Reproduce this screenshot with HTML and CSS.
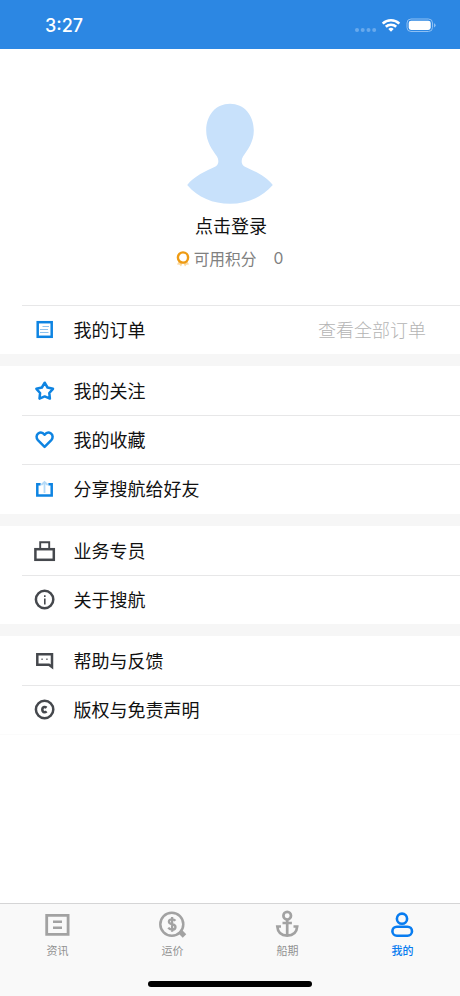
FILE: index.html
```html
<!DOCTYPE html>
<html lang="zh-CN">
<head>
<meta charset="utf-8">
<title>我的</title>
<link rel="stylesheet" href="styles.css">
</head>
<body>
<div class="app">
  <header class="status">
    <span class="time">3:27</span>
    <svg class="status-icons" width="84" height="20" viewBox="0 0 84 20">
      <g fill="#68a9ec"><circle cx="4" cy="14" r="2"/><circle cx="9.700" cy="14" r="2"/><circle cx="15.500" cy="14" r="2"/><circle cx="21.200" cy="14" r="2"/></g>
      <g fill="none" stroke="#fff" stroke-width="2.600"><path d="M29.700 7.600a12 12 0 0 1 16.600 0"/><path d="M32.800 10.800a7.600 7.600 0 0 1 10.400 0"/></g>
      <path d="M38 15.800l-2.700-2.800a4 4 0 0 1 5.400 0z" fill="#fff"/>
      <rect x="54" y="3" width="25.500" height="12.500" rx="4" fill="none" stroke="#8fc0f3"/>
      <rect x="55.700" y="4.700" width="22" height="9.200" rx="2.400" fill="#fff"/>
      <path d="M81 7.200v4.200q1.600-.7 1.600-2.100T81 7.200z" fill="#8fc0f3"/>
    </svg>
  </header>

  <section class="profile">
    <svg class="avatar" width="86" height="101" viewBox="0 0 86 101">
      <path fill="#c8e1fb" d="M43 .8C57 .8 66.800 12 66.800 27.500C66.800 39 60.500 47 56 53.500C54 57 54 61 57.500 63.500C67 68 79 73 85.800 82C75 94.500 60 100.800 43 100.800C26 100.800 11 94.500 .2 82C7 73 19 68 28.500 63.500C32 61 32 57 30 53.500C25.500 47 19.200 39 19.200 27.500C19.200 12 29 .8 43 .8z"/>
    </svg>
    <div class="login">点击登录</div>
    <div class="points">
      <svg width="14" height="16" viewBox="0 0 14 16">
        <path d="M3 9.500L1 13.500l2.500.2L5 15.500l2-4 2 4 1.500-1.800 2.500-.2-2-4z" fill="#fbd9a0"/>
        <circle cx="7" cy="6.500" r="5.100" fill="#fff" stroke="#ee9b13" stroke-width="2.400"/>
      </svg>
      <span class="points-label">可用积分</span><span class="points-value">0</span>
    </div>
  </section>

  <main class="menu">
    <div class="group">
      <div class="row lined">
        <svg class="icon blue" viewBox="0 0 25 25"><rect x="5.700" y="5.200" width="14" height="14.600"/><path class="thin" d="M10.500 9.500H17M8 12.500h8M8 15.500h8.500"/></svg>
        <span>我的订单</span><span class="more">查看全部订单</span>
      </div>
    </div>
    <div class="group last-tall">
      <div class="row">
        <svg class="icon blue" viewBox="0 0 25 25"><path stroke-linejoin="round" d="M12.700 4.700L15.500 9.500L21 10.800L17.300 15L17.900 20.600L12.700 18.400L7.500 20.600L8.100 15L4.400 10.800L9.900 9.500z"/></svg>
        <span>我的关注</span>
      </div>
      <div class="row lined">
        <svg class="icon blue" viewBox="0 0 25 25"><path stroke-linejoin="round" d="M12.600 19.800L5.900 13.100C4 11.100 4.200 8 6.200 6.500C8.400 5 11 5.700 12.600 7.800C14.200 5.700 16.800 5 19 6.500C21 8 21.200 11.100 19.300 13.100z"/></svg>
        <span>我的收藏</span>
      </div>
      <div class="row lined">
        <svg class="icon blue" viewBox="0 0 25 25"><path d="M8.600 8.300H5.300V19.500H19.700V8.300H16.400"/><path class="pale" d="M12.500 17V6.500M9.300 9l3.200-3 3.200 3"/></svg>
        <span>分享搜航给好友</span>
      </div>
    </div>
    <div class="group">
      <div class="row">
        <svg class="icon dark" viewBox="0 0 25 25"><rect x="3.400" y="11.200" width="18.400" height="10.600"/><path stroke-width="1.900" d="M8.200 10.500V4.200h9v6.300"/></svg>
        <span>业务专员</span>
      </div>
      <div class="row lined">
        <svg class="icon dark" viewBox="0 0 25 25"><circle cx="12.600" cy="12.500" r="8.700"/><path stroke-width="1.600" d="M12.800 8.200v1.800M12.800 11.500v6"/></svg>
        <span>关于搜航</span>
      </div>
    </div>
    <div class="group">
      <div class="row">
        <svg class="icon dark" viewBox="0 0 25 25"><path d="M5.300 6.300H20V19L17 16.800H5.300z"/><path stroke-width="1.500" stroke="#85878b" d="M9.200 11.300H11M14 11.300h1.800"/></svg>
        <span>帮助与反馈</span>
      </div>
      <div class="row lined">
        <svg class="icon dark" viewBox="0 0 25 25"><circle cx="12.600" cy="12.500" r="8.700"/><path d="M14.600 10.700Q13.500 9.800 12.200 10Q10.300 10.400 10.300 12.600Q10.400 14.900 12.400 15.200Q13.700 15.200 14.600 14.300"/></svg>
        <span>版权与免责声明</span>
      </div>
    </div>
  </main>

  <nav class="tabs">
    <div class="tab">
      <svg viewBox="0 0 31 31"><path stroke-width="2.800" d="M4.700 6.300H26.100V25.300H4.700z"/><path stroke-width="2.600" d="M11 12.700h9M11 18.700h9"/></svg>
      <span>资讯</span>
    </div>
    <div class="tab">
      <svg viewBox="0 0 31 31"><circle cx="14.800" cy="15.300" r="11.500" stroke-width="2.500"/><path stroke-width="5" d="M22.800 22.300L27.500 27"/><path stroke-width="2.300" d="M18.400 11.800Q17.300 10.300 15 10.300Q11.900 10.400 11.900 12.800Q12 14.700 15 15.200Q18.500 15.900 18.500 18.100Q18.400 20.600 15.100 20.600Q12.400 20.600 11.300 18.700M15.100 8v14.700"/></svg>
      <span>运价</span>
    </div>
    <div class="tab">
      <svg viewBox="0 0 31 31"><circle cx="15.200" cy="6.700" r="3.800" stroke-width="2.700"/><path stroke-width="2.700" d="M15.200 10.500V27M10.500 14h9.400M9 17.500H5.300Q6 26.500 15.200 26.600Q24.500 26.500 25.200 17.500H21.500"/></svg>
      <span>船期</span>
    </div>
    <div class="tab active">
      <svg viewBox="0 0 31 31"><circle cx="15" cy="9.700" r="5.100" stroke-width="2.600"/><rect x="5.400" y="17.700" width="19.600" height="9" rx="4.500" stroke-width="2.600"/></svg>
      <span>我的</span>
    </div>
  </nav>
  <div class="home"></div>
</div>
</body>
</html>
```
FILE: styles.css
```css
* { box-sizing: border-box; }
body { margin: 0; font-family: "Noto Sans CJK SC", sans-serif; color: #111; }
.app { width: 460px; height: 996px; display: flex; flex-direction: column; background: #fff; overflow: hidden; position: relative; }
svg { display: block; flex: none; }

.status { height: 49px; flex: none; background: #2c87e3; display: flex; justify-content: space-between; padding: 16px 23px 0 45px; }
.time { font: 500 18px/20px Inter, sans-serif; color: #fff; }

.profile { height: 256px; flex: none; display: flex; flex-direction: column; align-items: center; padding-top: 54px; }
.login { font-size: 18px; line-height: 26px; margin-top: 8px; padding-left: 2px; }
.points { display: flex; align-items: center; font-size: 15.700px; line-height: 24px; margin-top: 9px; padding-right: 1px; color: #808080; }
.points-label { margin: 0 17px 0 4px; }
.points-value { font-family: Inter, sans-serif; }

.menu { flex: 1; display: flex; flex-direction: column; gap: 12px; background: linear-gradient(#f6f6f6 420px, #fff 420px); }
.group { background: #fff; }
.group:last-child { box-shadow: 0 1px #fbfbfb; }
.last-tall { padding-bottom: 1px; }
.row { height: 49px; margin-left: 22px; padding: 0 34px 0 10px; display: flex; align-items: center; font-size: 18px; line-height: 26px; }
.row span { padding-bottom: 2px; }
.lined { box-shadow: inset 0 1px #e7e7e8; }
.more { margin-left: auto; color: #b4b4b4; font-weight: 300; }
.icon { width: 25px; height: 25px; margin-right: 16.500px; fill: none; stroke-width: 2.500; }
.blue { stroke: #0e84e2; }
.dark { stroke: #45484d; }
.thin { stroke: #8fc3ef; stroke-width: 1; }
.pale { stroke: #b5daf7; stroke-width: 1.800; }

.tabs { height: 93px; flex: none; background: #f9f9f9; border-top: 1px solid #d5d5d6; display: grid; grid-template-columns: repeat(4, 1fr); }
.tab { display: flex; flex-direction: column; align-items: center; padding-top: 5px; font-size: 11px; line-height: 16px; color: #929292; }
.tab svg { width: 31px; height: 31px; margin-bottom: 2px; fill: none; stroke: #a2a2a2; }
.active { color: #087cf0; font-weight: 500; }
.active svg { stroke: #087cf0; }
.home { position: absolute; left: 148px; bottom: 9px; width: 164px; height: 6px; border-radius: 3px; background: #000; }
```
